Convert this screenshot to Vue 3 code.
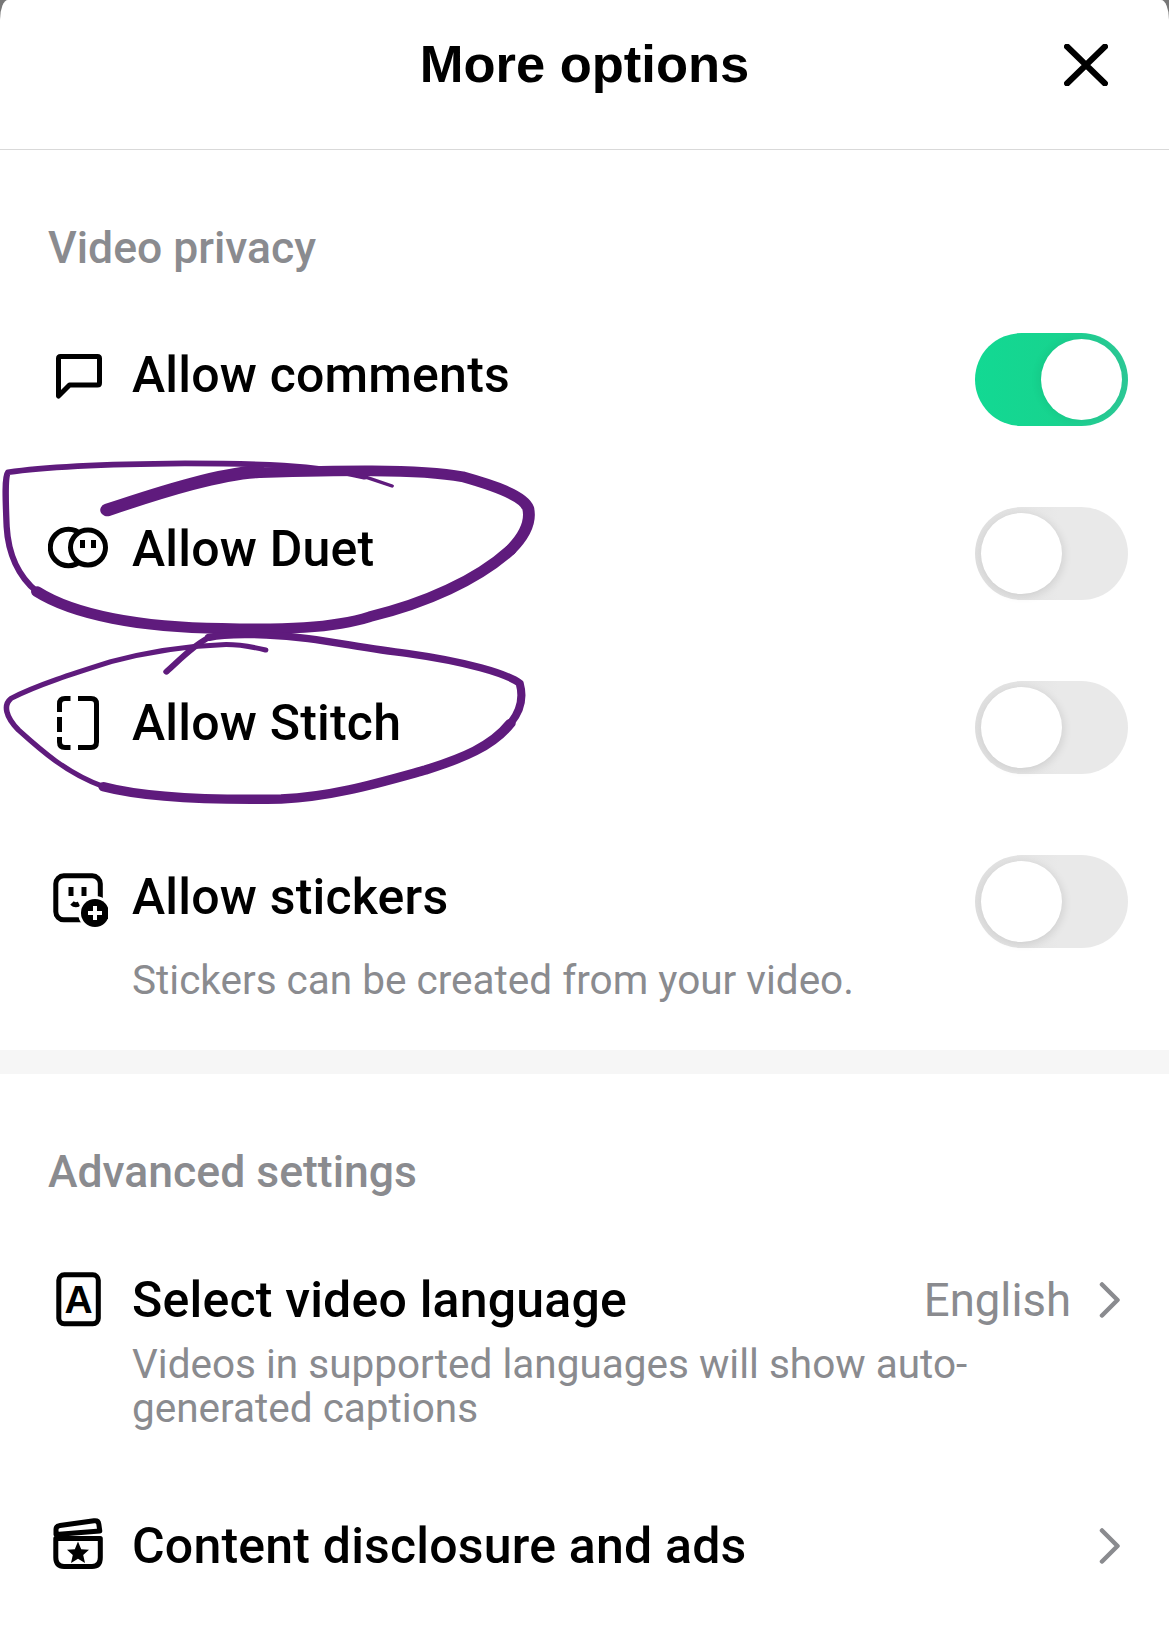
<template>
  <div class="sheet">
    <header class="sheet-header">
      <span></span>
      <h1 class="sheet-title">More options</h1>
      <svg class="close-icon" viewBox="0 0 44 42" width="44" height="42">
        <path d="M3 2.5 L41 39.5 M41 2.5 L3 39.5" fill="none" stroke="#000" stroke-width="6" stroke-linecap="round" />
      </svg>
    </header>

    <section class="privacy">
      <h2 class="section-label">Video privacy</h2>

      <div v-for="row in toggleRows" :key="row.title" class="toggle-row">
        <div class="row-main">
          <div class="row-head">
            <svg class="row-icon" viewBox="0 0 60 60" width="60" height="60">
              <template v-if="row.icon === 'comment'">
                <path d="M10.5 13.5 Q10.5 11.5 12.5 11.5 H49.5 Q51.5 11.5 51.5 13.5 V38 Q51.5 40 49.5 40 H21.5 L10.5 51 Z" class="line" />
              </template>
              <template v-else-if="row.icon === 'duet'">
                <circle cx="20.5" cy="28.5" r="18.2" class="line" />
                <circle cx="40" cy="28.5" r="17.5" class="line disc" />
                <path d="M34.5 21 V29 M45.5 21 V29" class="line" />
              </template>
              <template v-else-if="row.icon === 'stitch'">
                <path d="M30 5.5 H43 Q48.5 5.5 48.5 11 V49 Q48.5 54.5 43 54.5 H30" class="line" />
                <path d="M22.5 5.5 H17 Q11.5 5.5 11.5 11 V19" class="line" />
                <path d="M11.5 24 V39" class="line" />
                <path d="M11.5 44 V49 Q11.5 54.5 17 54.5 H22.5" class="line" />
              </template>
              <template v-else>
                <rect x="7.8" y="8.8" width="44.5" height="44" rx="8" class="line" />
                <path d="M23 20 V29 M36 20 V29" class="line" />
                <path d="M24 36 Q27 39 31 37" class="line" stroke-width="3.5" />
                <circle cx="47" cy="46" r="17" fill="#fff" />
                <circle cx="47" cy="46" r="14" fill="#000" />
                <path d="M40 46 H54 M47 39 V53" stroke="#fff" stroke-width="4" fill="none" />
              </template>
            </svg>
            <span class="row-title">{{ row.title }}</span>
          </div>
          <p v-if="row.desc" class="row-desc">{{ row.desc }}</p>
        </div>
        <div class="toggle" :class="{ on: row.on }"><div class="knob"></div></div>
      </div>
    </section>

    <div class="band"></div>

    <section class="advanced">
      <h2 class="section-label">Advanced settings</h2>

      <div class="link-row">
        <div class="row-main">
          <div class="row-head">
            <svg class="row-icon" viewBox="0 0 60 60" width="60" height="60">
              <rect x="10.8" y="4.8" width="39.5" height="49" rx="5.5" class="line" />
              <text x="30.5" y="43" text-anchor="middle" class="icon-letter">A</text>
            </svg>
            <span class="row-title">Select video language</span>
          </div>
          <p class="row-desc">Videos in supported languages will show auto-<br />generated captions</p>
        </div>
        <div class="row-value">
          <span>English</span>
          <svg class="chevron" viewBox="0 0 22 36" width="22" height="36"><path d="M3 2.5 L18.5 18 L3 33.5" /></svg>
        </div>
      </div>

      <div class="link-row second">
        <div class="row-main">
          <div class="row-head">
            <svg class="row-icon" viewBox="0 0 60 60" width="60" height="60">
              <path d="M7.8 22.5 H52.3 V41.5 Q52.3 50.5 44 50.5 H16 Q7.8 50.5 7.8 41.5 Z" class="line" />
              <path d="M8 18.5 V13.5 Q8 10 12 9.5 L46 4.8 Q50.3 4.3 50.8 8 L51.8 15 Z" class="line" />
              <path d="M30 25.5 L33.2 33.2 L41 33.8 L35.2 39 L37 47 L30 42.8 L23 47 L24.8 39 L19 33.8 L26.8 33.2 Z" fill="#000" />
            </svg>
            <span class="row-title">Content disclosure and ads</span>
          </div>
        </div>
        <div class="row-value">
          <svg class="chevron" viewBox="0 0 22 36" width="22" height="36"><path d="M3 2.5 L18.5 18 L3 33.5" /></svg>
        </div>
      </div>
    </section>

    <!-- hand drawn circles sit on top of the rows -->
    <svg class="ink" viewBox="0 0 1568 1560" width="580" height="520" preserveAspectRatio="none">
      <path d="M1060 558 L985 530" stroke-width="10" />
      <path d="M985 530 C850 495 700 490 500 490 C300 492 120 500 22 517 C12 530 15 600 18 680 C22 760 50 830 100 875" stroke-width="17" />
      <path d="M100 875 C200 945 380 983 600 985 C760 990 900 985 1000 950 C1150 910 1290 840 1380 750" stroke-width="32" />
      <path d="M1380 750 C1425 700 1435 660 1428 625 C1415 585 1330 555 1250 530 C1130 505 900 512 700 518" stroke-width="32" />
      <path d="M700 515 C600 520 450 570 290 630" stroke-width="38" />
      <path d="M718 1050 C680 1040 640 1032 600 1034 C500 1038 400 1055 300 1085 C200 1120 100 1155 30 1195 C8 1215 15 1250 50 1290 C110 1350 180 1420 280 1460" stroke-width="15" />
      <path d="M280 1460 C400 1495 600 1500 760 1497 C900 1490 1020 1450 1150 1410 C1250 1375 1330 1340 1380 1270" stroke-width="28" />
      <path d="M1380 1270 C1410 1230 1415 1190 1405 1150 C1370 1120 1260 1085 1100 1060 C950 1040 850 1010 720 1005 C650 1002 600 1003 565 1012" stroke-width="22" />
      <path d="M565 1012 C525 1035 490 1075 450 1115" stroke-width="17" />
    </svg>
  </div>
</template>

<script setup>
const toggleRows = [
  { title: 'Allow comments', icon: 'comment', on: true },
  { title: 'Allow Duet', icon: 'duet', on: false },
  { title: 'Allow Stitch', icon: 'stitch', on: false },
  { title: 'Allow stickers', icon: 'sticker', on: false, desc: 'Stickers can be created from your video.' }
]
</script>

<style>
body {
  background: #777;
}
</style>

<style scoped>
.sheet {
  position: relative;
  width: 1169px;
  height: 1626px;
  overflow: hidden;
  background: #fff;
  border-radius: 8px 8px 0 0 / 20px 20px 0 0;
  font-family: Roboto, 'Liberation Sans', sans-serif;
  color: #000;
}

/* header */
.sheet-header {
  display: grid;
  grid-template-columns: 1fr auto 1fr;
  align-items: center;
  height: 130px;
  padding: 0 61px 19px;
  border-bottom: 1px solid #d9d9d9;
}

.sheet-title {
  margin: 0 0 3px;
  font-family: 'Liberation Sans', Arial, sans-serif;
  font-size: 52.5px;
  font-weight: 700;
}

.close-icon {
  justify-self: end;
}

/* sections */
.section-label {
  margin: 0;
  padding: 73px 0 0 48px;
  font-size: 44.5px;
  font-weight: 500;
  line-height: 50px;
  color: #8a8b8f;
}

.privacy {
  height: 900px;
}

.privacy .section-label {
  margin-bottom: 20px;
}

.band {
  height: 24px;
  background: #f6f6f6;
}

.toggle-row {
  display: flex;
  justify-content: space-between;
  align-items: flex-start;
  height: 134px;
  padding: 40px 41px 0 48px;
}

.link-row {
  display: flex;
  justify-content: space-between;
  align-items: flex-start;
  padding: 73px 48px 0 48px;
}

.link-row.second {
  padding-top: 86px;
}

.link-row .row-main {
  flex: 1;
  min-width: 0;
}

.toggle-row .row-main {
  margin-top: 12px;
}

.row-head {
  display: flex;
  align-items: center;
  gap: 24px;
  height: 60px;
}

.row-title {
  font-size: 50px;
  font-weight: 500;
  letter-spacing: 0.2px;
  line-height: 60px;
  white-space: nowrap;
}

.row-desc {
  margin: 12px 0 0 84px;
  font-size: 40.5px;
  line-height: 44px;
  color: #8a8b8f;
  white-space: nowrap;
}

.toggle-row .row-desc {
  margin-top: 31px;
}

.row-value {
  flex: none;
  display: flex;
  align-items: center;
  gap: 28px;
  height: 60px;
  font-size: 45.5px;
  color: #8a8b8f;
}

.chevron path {
  fill: none;
  stroke: #8a8b8f;
  stroke-width: 4.5;
  stroke-linecap: round;
  stroke-linejoin: round;
}

.line {
  fill: none;
  stroke: #000;
  stroke-width: 5;
  stroke-linejoin: round;
  stroke-linecap: butt;
}

.line.disc {
  fill: #fff;
}

.icon-letter {
  font-family: 'Liberation Sans', Arial, sans-serif;
  font-size: 39px;
  font-weight: 700;
}

/* toggles */
.toggle {
  position: relative;
  flex: none;
  width: 153px;
  height: 93px;
  border-radius: 47px;
  background: linear-gradient(90deg, #dedede 0%, #e9e9e9 55%);
}

.toggle.on {
  background: linear-gradient(90deg, #12d993 0%, #17d48f 50%, #2cc795 100%);
}

.knob {
  position: absolute;
  top: 6px;
  left: 6px;
  width: 81px;
  height: 81px;
  border-radius: 50%;
  background: #fff;
  box-shadow: 2px 2px 8px rgba(0, 0, 0, 0.1);
}

.toggle.on .knob {
  left: 66px;
  box-shadow: -3px 0 8px rgba(0, 0, 0, 0.06);
}

/* marker circles */
.ink {
  position: absolute;
  top: 300px;
  left: 0;
  pointer-events: none;
}

.ink path {
  fill: none;
  stroke: #5f1b7d;
  stroke-linecap: round;
  stroke-linejoin: round;
}
</style>
